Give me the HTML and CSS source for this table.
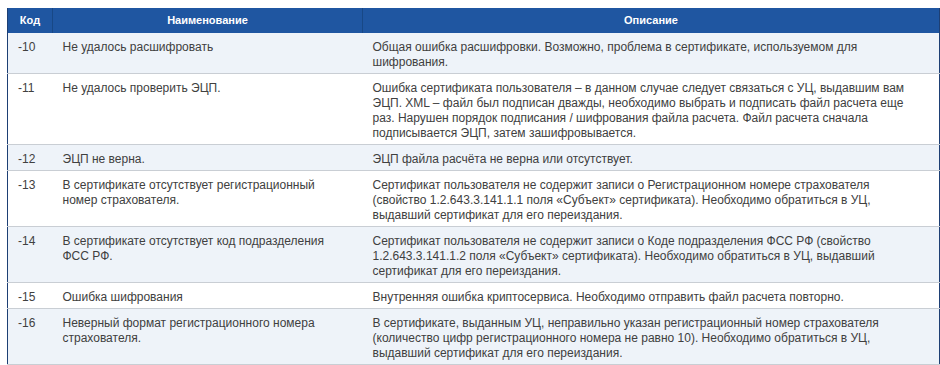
FILE: index.html
```html
<!DOCTYPE html>
<html lang="ru">
<head>
<meta charset="utf-8">
<title>Коды ошибок</title>
<link rel="stylesheet" href="styles.css">
</head>
<body>
<div class="page">
<table class="errors">
  <colgroup>
    <col class="c-code">
    <col class="c-name">
    <col class="c-desc">
  </colgroup>
  <thead>
    <tr>
      <th>Код</th>
      <th>Наименование</th>
      <th>Описание</th>
    </tr>
  </thead>
  <tbody>
    <tr class="alt">
      <td>-10</td>
      <td>Не удалось расшифровать</td>
      <td class="desc">Общая ошибка расшифровки. Возможно, проблема в сертификате, используемом для шифрования.</td>
    </tr>
    <tr>
      <td>-11</td>
      <td>Не удалось проверить ЭЦП.</td>
      <td class="desc">Ошибка сертификата пользователя – в данном случае следует связаться с УЦ, выдавшим вам ЭЦП. XML – файл был подписан дважды, необходимо выбрать и подписать файл расчета еще раз. Нарушен порядок подписания / шифрования файла расчета. Файл расчета сначала подписывается ЭЦП, затем зашифровывается.</td>
    </tr>
    <tr class="alt">
      <td>-12</td>
      <td>ЭЦП не верна.</td>
      <td class="desc">ЭЦП файла расчёта не верна или отсутствует.</td>
    </tr>
    <tr>
      <td>-13</td>
      <td>В сертификате отсутствует регистрационный номер страхователя.</td>
      <td class="desc">Сертификат пользователя не содержит записи о Регистрационном номере страхователя (свойство 1.2.643.3.141.1.1 поля «Субъект» сертификата). Необходимо обратиться в УЦ, выдавший сертификат для его переиздания.</td>
    </tr>
    <tr class="alt">
      <td>-14</td>
      <td>В сертификате отсутствует код подразделения ФСС РФ.</td>
      <td class="desc">Сертификат пользователя не содержит записи о Коде подразделения ФСС РФ (свойство 1.2.643.3.141.1.2 поля «Субъект» сертификата). Необходимо обратиться в УЦ, выдавший сертификат для его переиздания.</td>
    </tr>
    <tr>
      <td>-15</td>
      <td>Ошибка шифрования</td>
      <td class="desc">Внутренняя ошибка криптосервиса. Необходимо отправить файл расчета повторно.</td>
    </tr>
    <tr class="alt">
      <td>-16</td>
      <td>Неверный формат регистрационного номера страхователя.</td>
      <td class="desc">В сертификате, выданным УЦ, неправильно указан регистрационный номер страхователя (количество цифр регистрационного номера не равно 10). Необходимо обратиться в УЦ, выдавший сертификат для его переиздания.</td>
    </tr>
  </tbody>
</table>
</div>
</body>
</html>
```

FILE: styles.css
```css
html, body {
  margin: 0;
  padding: 0;
  background: #ffffff;
}

.page {
  padding: 8px 1px 0 7px;
}

.errors {
  width: 932px;
  border-collapse: collapse;
  table-layout: fixed;
  font-family: "Liberation Sans", Arial, sans-serif;
  font-size: 12px;
  line-height: 15px;
  color: #404040;
  border-left: 1px solid #1d3f74;
  border-right: 1px solid #1d3f74;
}

.c-code { width: 45px; }
.c-name { width: 310px; }
.c-desc { width: 577px; }

.errors th {
  background: #1f56a1;
  color: #ffffff;
  font-size: 11px;
  font-weight: bold;
  height: 25px;
  padding: 0 4px;
  text-align: center;
  vertical-align: middle;
  border-left: 1px solid #184886;
  box-sizing: border-box;
}

.errors th:first-child {
  border-left: none;
}

.errors td {
  padding: 7px 10px 3px;
  vertical-align: top;
  border-bottom: 1px solid #c9ced4;
  background: #ffffff;
}

.errors td.desc {
  padding-right: 24px;
}

.errors tr.alt td {
  background: #eef3f9;
}
```
